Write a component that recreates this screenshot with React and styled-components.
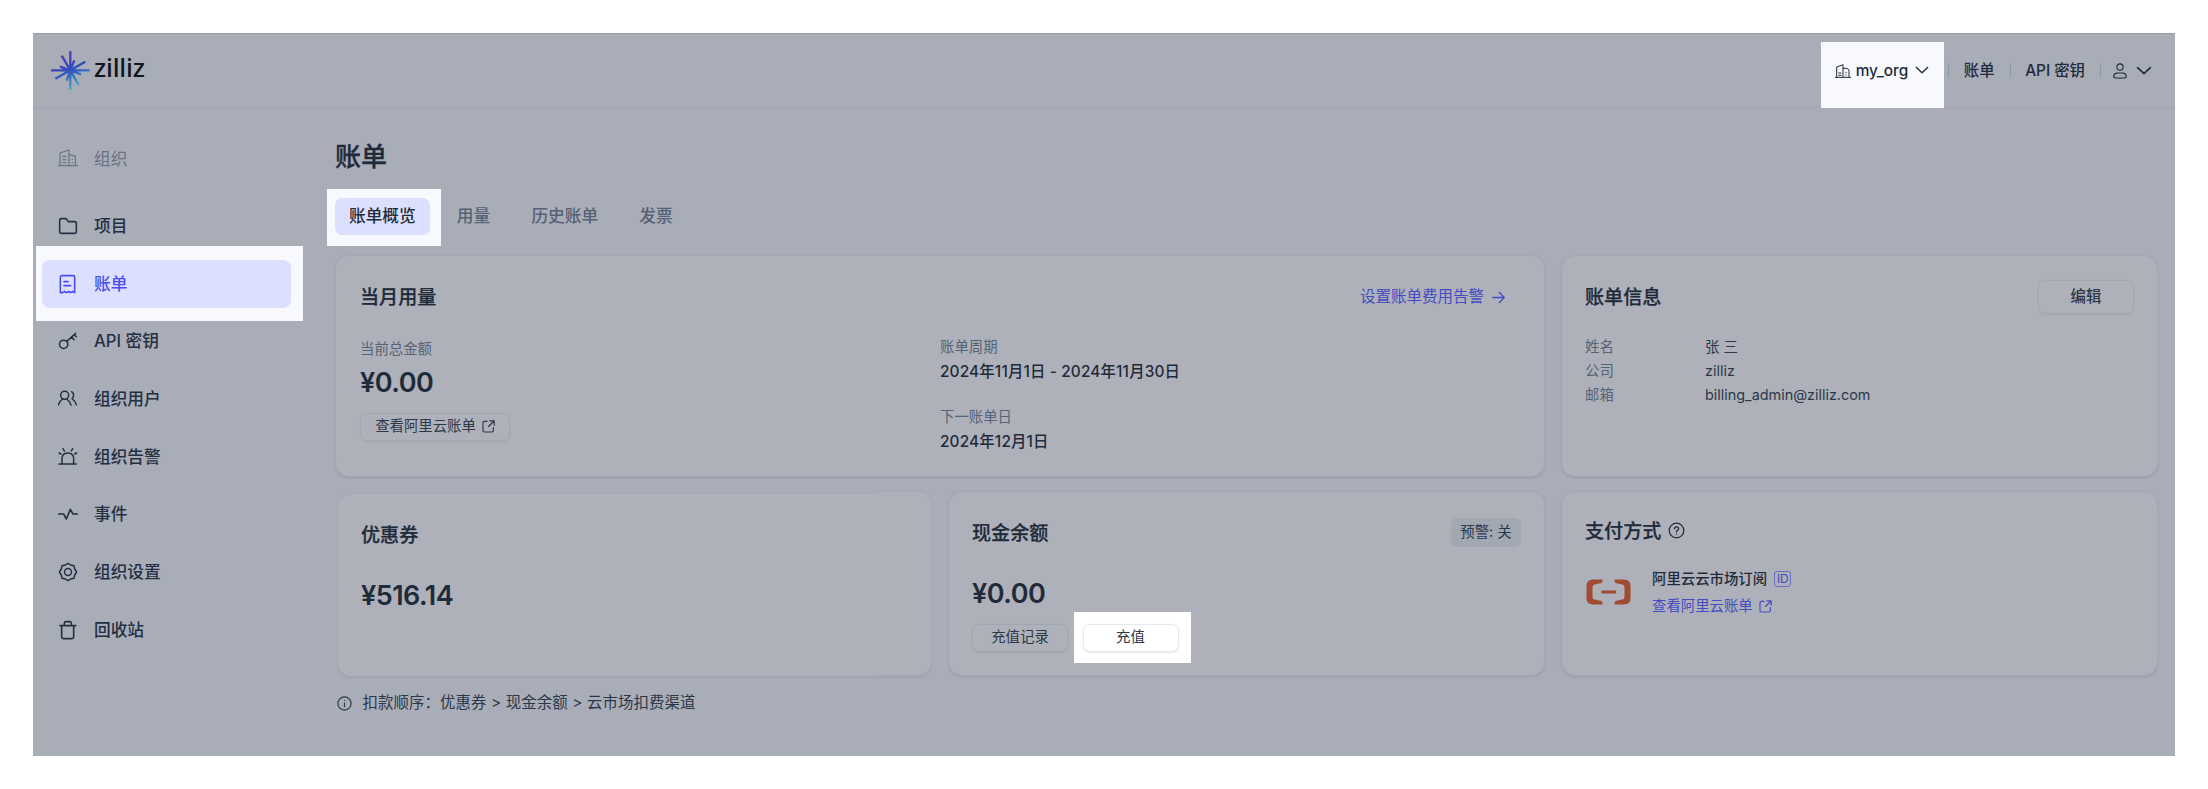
import React from "react";
import styled, { createGlobalStyle, css } from "styled-components";

const c = {
  shade: "#a9adb8",
  card: "#aeb1b9",
  line: "#a1a6b2",
  ink: "#1f2b3b",
  body: "#2c384a",
  muted: "#566275",
  link: "#444cc0",
  lit: "#f8f9fe",
  active: "#dcdffe",
};

const GlobalStyle = createGlobalStyle`
  * { box-sizing: border-box; }
  body {
    margin: 0;
    background: #fff;
    font-family: Inter, "Noto Sans CJK SC", sans-serif;
    color: ${c.ink};
  }
`;

const Page = styled.div`
  height: 789px;
  padding: 33px;
  overflow: hidden;
`;

/* A lit rectangle that sits behind the highlighted control. */
const lit = (top, right, bottom, left, color = c.lit) => css`
  position: relative;
  isolation: isolate;
  &::before {
    content: "";
    position: absolute;
    z-index: -1;
    inset: ${-top}px ${-right}px ${-bottom}px ${-left}px;
    background: ${color};
  }
`;

const Frame = styled.div`
  width: 2142px;
  height: 723px;
  background: ${c.shade};
  border-top: 1px solid #989ca6;
`;

const Header = styled.header`
  display: flex;
  align-items: center;
  justify-content: space-between;
  height: 74px;
  padding: 0 23px 1px 18px;
  border-bottom: 1px solid ${c.line};
`;

const Brand = styled.div`
  display: flex;
  align-items: center;
  gap: 4px;
`;

const BrandName = styled.span`
  font-family: "Noto Sans", sans-serif;
  font-size: 25.5px;
  font-weight: 500;
  line-height: 30px;
  letter-spacing: -0.2px;
  color: #10151f;
  margin-top: -7px;
`;

const HeaderNav = styled.nav`
  display: flex;
  align-items: center;
  font-size: 15.4px;
  font-weight: 500;
  line-height: 22px;
  padding-top: 1px;
`;

const OrgSwitch = styled.div`
  display: flex;
  align-items: center;
  gap: 5px;
  height: 22px;
  margin-right: 19px;
  ${lit(18, 15, 26, 14)}
  svg:last-child { margin-left: 2px; }
`;

const Divider = styled.span`
  width: 1px;
  height: 15px;
  background: #8f98a8;
`;

const NavLink = styled.span`
  padding: 0 15px 0 14.5px;
`;

const UserMenu = styled.div`
  display: flex;
  align-items: center;
  gap: 9.5px;
  padding-left: 11.5px;
`;

const Body = styled.div`
  display: flex;
`;

const Sidebar = styled.aside`
  display: flex;
  flex-direction: column;
  gap: 9.7px;
  width: 302px;
  padding: 27px 44px 0 9px;
`;

const SideItem = styled.div`
  display: flex;
  align-items: center;
  gap: 16px;
  height: 48px;
  padding-left: 16px;
  border-radius: 8px;
  font-size: 16.7px;
  font-weight: 500;
  line-height: 24px;
  color: ${(p) => (p.$tone === "group" ? "#6b7280" : p.$tone === "active" ? "#4b4ff2" : "#243042")};
  ${(p) => p.$tone === "group" && "margin-bottom: 9.3px; font-weight: 400;"}
  ${(p) => p.$tone === "active" && lit(14, 12, 13, 6)}
  ${(p) =>
    p.$tone === "active" &&
    css`
      &::after {
        content: "";
        position: absolute;
        z-index: -1;
        inset: 0;
        border-radius: 8px;
        background: ${c.active};
      }
    `}
`;

const Main = styled.main`
  flex: 1;
  padding: 31px 17px 0 0;
`;

const PageTitle = styled.h1`
  margin: 0;
  font-size: 26px;
  font-weight: 500;
  line-height: 36px;
  -webkit-text-stroke: 0.3px;
`;

const Tabs = styled.div`
  display: flex;
  margin-top: 23px;
`;

const Tab = styled.span`
  padding: 0 ${(p) => (p.$pad ? p.$pad : 20.6)}px;
  height: 37px;
  line-height: 36px;
  font-size: 16.7px;
  font-weight: 500;
  color: ${(p) => (p.$active ? c.ink : "#556175")};
  ${(p) => p.$active && lit(9, 11, 11, 8)}
  ${(p) =>
    p.$active &&
    css`
      margin-right: 6.5px;
      &::after {
        content: "";
        position: absolute;
        z-index: -1;
        inset: 0;
        border-radius: 7px;
        background: ${c.active};
      }
    `}
`;

const Cards = styled.div`
  display: grid;
  grid-template-columns: repeat(3, 597px);
  grid-template-rows: 222px 185px;
  column-gap: 16px;
  row-gap: 14px;
  margin-top: 20px;
`;

const Card = styled.section`
  grid-column: span ${(p) => p.$span || 1};
  padding: ${(p) => p.$pad || "24px"};
  background: ${c.card};
  border: 1px solid #a3a9b4;
  border-radius: 14px;
  box-shadow: 0 1px 2px rgba(60, 75, 100, 0.16);
`;

/* The coupon card is set slightly lower, with a raised right end. */
const CouponCard = styled(Card)`
  position: relative;
  margin: 2px 0 -1px 2px;
  box-shadow: 0 1px 1px rgba(60, 75, 100, 0.1);
  &::after {
    content: "";
    position: absolute;
    top: -3px;
    right: -1px;
    bottom: 0;
    width: 53px;
    background: ${c.card};
    border: 1px solid #a3a9b4;
    border-left: 0;
    border-radius: 0 14px 14px 0;
  }
`;

const CardHead = styled.div`
  display: flex;
  align-items: center;
  justify-content: space-between;
  height: 34px;
`;

const CardTitle = styled.h2`
  display: flex;
  align-items: center;
  gap: 7px;
  margin: 0;
  font-size: 19.1px;
  font-weight: 500;
  line-height: 28px;
  -webkit-text-stroke: 0.25px;
`;

const TextLink = styled.span`
  display: flex;
  align-items: center;
  gap: ${(p) => p.$gap || 8}px;
  font-size: ${(p) => p.$size || 15.5}px;
  line-height: 20px;
  color: ${c.link};
`;

const Split = styled.div`
  display: grid;
  grid-template-columns: 580px 1fr;
`;

const Stack = styled.div`
  display: flex;
  flex-direction: column;
  align-items: flex-start;
  padding-top: ${(p) => p.$top || 0}px;
`;

const Label = styled.span`
  font-size: 14.4px;
  line-height: 20px;
  color: ${c.muted};
`;

const DateText = styled.span`
  margin: 3px 0 24px;
  font-size: 15.4px;
  font-weight: 500;
  line-height: 23px;
  letter-spacing: 0.14px;
`;

const Amount = styled.div`
  font-size: 27px;
  font-weight: 600;
  line-height: 34px;
  margin-top: ${(p) => p.$top}px;
  letter-spacing: -0.5px;
`;

const Button = styled.button`
  display: flex;
  align-items: center;
  justify-content: center;
  gap: 6px;
  width: ${(p) => p.$w}px;
  height: ${(p) => p.$h || 28}px;
  padding: 0 0 1px;
  border: 1px solid ${(p) => (p.$lit ? "#e6e8f0" : "#a1a7b2")};
  border-radius: 7px;
  background: ${(p) => (p.$lit ? "#fff" : "transparent")};
  box-shadow: 0 1px 2px rgba(60, 75, 100, ${(p) => (p.$lit ? 0.12 : 0.08)});
  font-family: inherit;
  font-size: ${(p) => p.$size || 14.4}px;
  font-weight: ${(p) => p.$weight || 400};
  line-height: 20px;
  color: ${c.body};
`;

const Buttons = styled.div`
  display: flex;
  gap: 14.5px;
  margin-top: 12.5px;
`;

const LitButton = styled.div`
  ${lit(12, 12.5, 11, 8.5, "#fff")}
`;

const InfoList = styled.dl`
  display: grid;
  grid-template-columns: 120px 1fr;
  row-gap: 4.3px;
  margin: 22.8px 0 0;
  font-size: 14.4px;
  line-height: 20px;
  dt { color: ${c.muted}; }
  dd { margin: 0; color: ${c.body}; }
`;

const Tag = styled.span`
  width: 70px;
  height: 29px;
  margin-top: -2px;
  border-radius: 6px;
  background: #a2a8b2;
  font-size: 14.4px;
  line-height: 28px;
  text-align: center;
  color: ${c.body};
`;

const Payment = styled.div`
  display: flex;
  align-items: center;
  gap: 21px;
  margin-top: 21px;
  padding-left: 1px;
`;

const PayName = styled.div`
  display: flex;
  align-items: center;
  gap: 7px;
  margin-bottom: 7.5px;
  font-size: 14.4px;
  font-weight: 500;
  line-height: 20px;
`;

const IdBadge = styled.span`
  width: 17px;
  height: 16px;
  border: 1px solid #6a70c0;
  border-radius: 3px;
  font-size: 12px;
  font-weight: 400;
  line-height: 14px;
  letter-spacing: -0.3px;
  text-align: center;
  color: ${c.link};
`;

const Note = styled.div`
  display: flex;
  align-items: center;
  gap: 10.5px;
  margin-top: 15px;
  padding-left: 2px;
  font-size: 15.4px;
  line-height: 24px;
  letter-spacing: 0.12px;
  color: ${c.body};
`;

const Icon = ({ w = 20, h = w, box = "0 0 60 60", sw = 4, children }) => (
  <svg width={w} height={h} viewBox={box} fill="none" stroke="currentColor" strokeWidth={sw} strokeLinecap="round" strokeLinejoin="round">
    {children}
  </svg>
);

const Buildings = () => (
  <Icon sw={3.6}>
    <path d="M0 50H59M6 50V12L33 3V50M33 16L52 22V50M15 22H24M15 32H24M15 41H24M42 31H44M42 41H44" />
  </Icon>
);
const Folder = () => (
  <Icon sw={4.8}>
    <path d="M5 13Q5 8 10 8H22Q25 8 27 11L31 17H50Q55 17 55 22V47Q55 52 50 52H10Q5 52 5 47Z" />
  </Icon>
);
const Receipt = () => (
  <Icon sw={4.8}>
    <path d="M7 56V10Q7 5 12 5H45Q50 5 50 10V56L44 52L38 56L32 52L26 56L20 52L14 56Z M18 23H30M18 35H38" />
  </Icon>
);
const Key = () => (
  <Icon sw={4.5}>
    <circle cx="17" cy="40" r="12.5" />
    <path d="M26 31L53 7M41 18L48 26M49 11L55 17" />
  </Icon>
);
const Users = () => (
  <Icon sw={4.5}>
    <circle cx="20" cy="19" r="12" />
    <path d="M1 48Q5 36 14 30M26 30Q35 36 39 48M41 8Q47 12 47 18Q47 24 42 29M43 30Q52 36 55 47" />
  </Icon>
);
const Siren = () => (
  <Icon sw={4.5}>
    <path d="M3 51H55M12 51V34Q13 18 29 18Q46 18 47 34V51M3 18L9 21M15 5L19 12M44 5L40 12M56 18L50 21" />
  </Icon>
);
const Pulse = () => (
  <Icon sw={4.8}>
    <path d="M1 30H17L25 45L37 16L45 30H58" />
  </Icon>
);
const Gear = () => (
  <Icon sw={4.4}>
    <circle cx="30" cy="30" r="10.5" />
    <path d="M30 4L38 9L48 11L50 21L56 30L50 39L48 49L38 51L30 56L22 51L12 49L10 39L4 30L10 21L12 11L22 9Z" />
  </Icon>
);
const Trash = () => (
  <Icon sw={4.8}>
    <path d="M6 17H53M11 17V51Q11 56 16 56H42Q47 56 47 51V17M19 16V10Q19 5 24 5H35Q40 5 40 10V16" />
  </Icon>
);
const Chevron = ({ w }) => (
  <Icon w={w} h={w * 0.6} box="0 0 20 12" sw={2}>
    <path d="M2 2L10 9.5L18 2" />
  </Icon>
);
const External = ({ w = 13 }) => (
  <Icon w={w} box="0 0 13 13" sw={1.15}>
    <path d="M5 1.4H2.3Q1 1.4 1 2.7V10.8Q1 12 2.3 12H10Q11.3 12 11.3 10.8V7.6M7.8 0.8H12.2V5.2M12 1L6.5 6.5" />
  </Icon>
);

const Star = () => (
  <svg width="39" height="39" viewBox="0 0 117 117">
    <defs>
      <linearGradient id="ray" gradientUnits="userSpaceOnUse" x1="30" y1="5" x2="75" y2="112">
        <stop offset="0" stopColor="#6436b0" />
        <stop offset="0.45" stopColor="#3149bd" />
        <stop offset="0.6" stopColor="#3262bf" />
        <stop offset="1" stopColor="#47afcb" />
      </linearGradient>
    </defs>
    <path
      d="M58 0V116M0 58.1H116.5M32 14L58 58L83 102M103 32L58 58L13 83M70 28L58 58L47 89M27 47L58 58L90 70"
      stroke="url(#ray)"
      strokeWidth="7"
      fill="none"
    />
  </svg>
);

const CloudMark = () => (
  <svg width="45" height="26" viewBox="0 0 45 26" fill="#a04c32">
    <path d="M17 0.5H7Q0.5 0.5 0.5 7V19Q0.5 25.5 7 25.5H17L15.5 22L8.5 20.5Q6.5 20 6.5 18V8Q6.5 6 8.5 5.5L15.5 4Z" />
    <path d="M28 0.5H38Q44.5 0.5 44.5 7V19Q44.5 25.5 38 25.5H28L29.5 22L36.5 20.5Q38.5 20 38.5 18V8Q38.5 6 36.5 5.5L29.5 4Z" />
    <rect x="15.5" y="11.5" width="14.5" height="3" />
  </svg>
);

const menu = [
  [Buildings, "组织", "group"],
  [Folder, "项目"],
  [Receipt, "账单", "active"],
  [Key, "API 密钥"],
  [Users, "组织用户"],
  [Siren, "组织告警"],
  [Pulse, "事件"],
  [Gear, "组织设置"],
  [Trash, "回收站"],
];

export default function App() {
  return (
    <Page>
      <GlobalStyle />
      <Frame>
        <Header>
          <Brand>
            <Star />
            <BrandName>zilliz</BrandName>
          </Brand>
          <HeaderNav>
            <OrgSwitch>
              <Icon w={16} h={14} box="0 0 48 42" sw={3}>
                <path d="M1 40H47M5 40V9L24 2V40M24 13H36L42 18V40M11 27H18M11 34H18M33 25V26M33 33V34" />
              </Icon>
              my_org
              <Chevron w={14} />
            </OrgSwitch>
            <Divider />
            <NavLink>账单</NavLink>
            <Divider />
            <NavLink>API 密钥</NavLink>
            <Divider />
            <UserMenu>
              <Icon w={14} h={16} box="0 0 42 48" sw={3.4}>
                <circle cx="21" cy="12" r="9.5" />
                <path d="M14 30H28Q38 30 40 39Q40 45 35 45H7Q2 45 2 39Q4 30 14 30Z" />
              </Icon>
              <Chevron w={16} />
            </UserMenu>
          </HeaderNav>
        </Header>
        <Body>
          <Sidebar>
            {menu.map(([Glyph, label, tone]) => (
              <SideItem key={label} $tone={tone}>
                <Glyph />
                {label}
              </SideItem>
            ))}
          </Sidebar>
          <Main>
            <PageTitle>账单</PageTitle>
            <Tabs>
              <Tab $active $pad={14}>账单概览</Tab>
              <Tab>用量</Tab>
              <Tab>历史账单</Tab>
              <Tab>发票</Tab>
            </Tabs>
            <Cards>
              <Card $span={2} $pad="24px 39px 0 24px">
                <CardHead>
                  <CardTitle>当月用量</CardTitle>
                  <TextLink>
                    设置账单费用告警
                    <Icon w={13} box="0 0 13 13" sw={1.3}>
                      <path d="M0.7 6.5H12M7.4 1.5L12.2 6.5L7.4 11.5" />
                    </Icon>
                  </TextLink>
                </CardHead>
                <Split>
                  <Stack $top={24.5}>
                    <Label>当前总金额</Label>
                    <Amount $top={7.5}>¥0.00</Amount>
                    <Buttons>
                      <Button $w={150}>
                        查看阿里云账单
                        <External />
                      </Button>
                    </Buttons>
                  </Stack>
                  <Stack $top={22.5}>
                    <Label>账单周期</Label>
                    <DateText>2024年11月1日 - 2024年11月30日</DateText>
                    <Label>下一账单日</Label>
                    <DateText>2024年12月1日</DateText>
                  </Stack>
                </Split>
              </Card>
              <Card $pad="24px 23px 0 23px">
                <CardHead>
                  <CardTitle>账单信息</CardTitle>
                  <Button $w={96} $h={34} $size={15.4} $weight={500}>编辑</Button>
                </CardHead>
                <InfoList>
                  <dt>姓名</dt>
                  <dd>张 三</dd>
                  <dt>公司</dt>
                  <dd>zilliz</dd>
                  <dt>邮箱</dt>
                  <dd>billing_admin@zilliz.com</dd>
                </InfoList>
              </Card>
              <CouponCard $pad="23.5px 23px 0 23px">
                <CardHead>
                  <CardTitle>优惠券</CardTitle>
                </CardHead>
                <Amount $top={27}>¥516.14</Amount>
              </CouponCard>
              <Card $pad="24px 23px 0 23px">
                <CardHead>
                  <CardTitle>现金余额</CardTitle>
                  <Tag>预警: 关</Tag>
                </CardHead>
                <Amount $top={27}>¥0.00</Amount>
                <Buttons>
                  <Button $w={96}>充值记录</Button>
                  <LitButton>
                    <Button $w={96} $lit>充值</Button>
                  </LitButton>
                </Buttons>
              </Card>
              <Card $pad="21.5px 23px 0 23px">
                <CardHead>
                  <CardTitle>
                    支付方式
                    <Icon w={17} box="0 0 17 17" sw={1.25}>
                      <circle cx="8.5" cy="8.5" r="7.3" />
                      <path d="M6.4 6.8Q6.4 4.8 8.5 4.8Q10.6 4.8 10.6 6.7Q10.6 7.8 9.4 8.4Q8.5 8.9 8.5 10M8.5 12.1V12.2" />
                    </Icon>
                  </CardTitle>
                </CardHead>
                <Payment>
                  <CloudMark />
                  <div>
                    <PayName>
                      阿里云云市场订阅
                      <IdBadge>ID</IdBadge>
                    </PayName>
                    <TextLink $size={14.4} $gap={6}>
                      查看阿里云账单
                      <External />
                    </TextLink>
                  </div>
                </Payment>
              </Card>
            </Cards>
            <Note>
              <Icon w={15} box="0 0 15 15" sw={1.2}>
                <circle cx="7.5" cy="7.5" r="6.6" />
                <path d="M7.5 7V10.6M7.5 4.4V4.5" />
              </Icon>
              扣款顺序：优惠券 &gt; 现金余额 &gt; 云市场扣费渠道
            </Note>
          </Main>
        </Body>
      </Frame>
    </Page>
  );
}
